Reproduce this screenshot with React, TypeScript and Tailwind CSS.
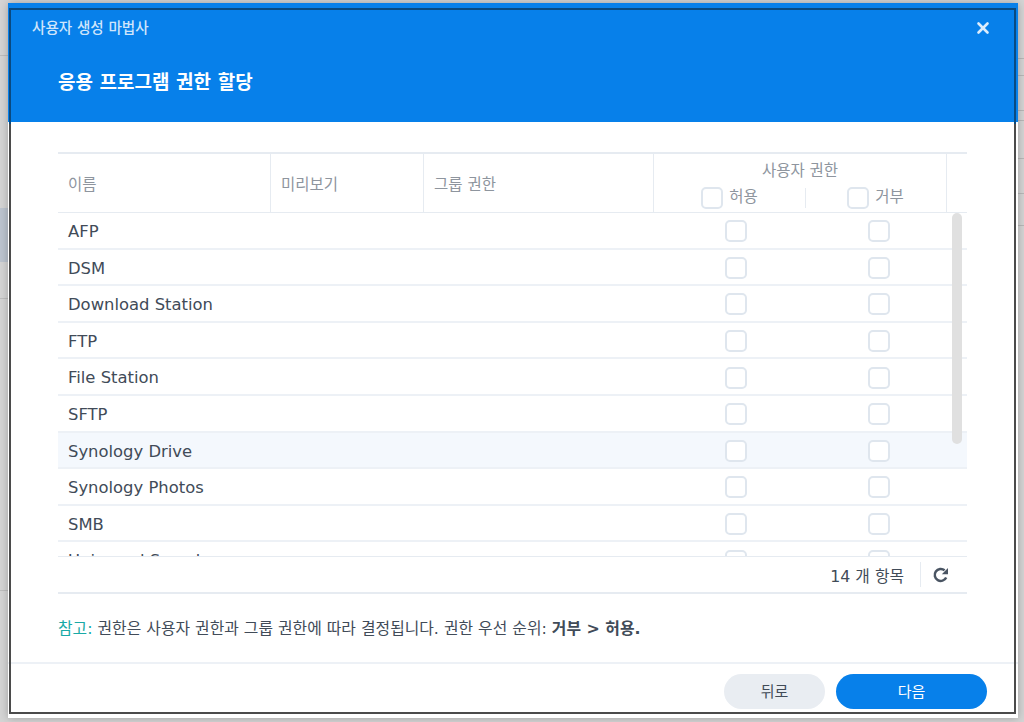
import { X } from "lucide-react";

const APPS = [
  "AFP",
  "DSM",
  "Download Station",
  "FTP",
  "File Station",
  "SFTP",
  "Synology Drive",
  "Synology Photos",
  "SMB",
  "Universal Search",
];

const font = { fontFamily: '"DejaVu Sans", "Noto Sans CJK KR", sans-serif' };

function Box() {
  return <span className="block w-[22px] h-[22px] shrink-0 rounded-[5px] border-2 border-[#dfe6ee] bg-white" />;
}

function Refresh() {
  return (
    <svg width="18" height="18" viewBox="0 0 18 18" fill="none">
      <path d="M14.2 11.4A6 6 0 1 1 12.6 4.3" stroke="#4a5563" strokeWidth="2.5" />
      <path d="M16 2v6.2H9.8z" fill="#4a5563" />
    </svg>
  );
}

export default function App() {
  return (
    <div className="relative w-[1024px] h-[722px] overflow-hidden bg-[#d4d4d4] pl-[8px] pt-[3px]" style={font}>
      {/* page behind the dialog */}
      <div className="absolute left-0 top-[55px] w-[8px] h-px bg-[#bdbdbd]" />
      <div className="absolute left-0 top-[208px] w-[8px] h-[54px] bg-[#bcc4cf]" />
      <div className="absolute left-0 top-[298px] w-[8px] h-px bg-[#bdbdbd]" />
      <div className="absolute left-0 top-[590px] w-[8px] h-px bg-[#bdbdbd]" />
      <div className="absolute right-0 top-[58px] w-[6px] h-px bg-[#b8b8b8]" />
      <div className="absolute right-0 top-[75px] w-[6px] h-px bg-[#b8b8b8]" />
      <div className="absolute right-0 top-[110px] w-[6px] h-px bg-[#b8b8b8]" />
      <div className="absolute right-0 top-[120px] w-[6px] h-px bg-[#b8b8b8]" />
      <div className="absolute right-0 top-[158px] w-[6px] h-px bg-[#b8b8b8]" />
      <div className="absolute right-0 top-[193px] w-[6px] h-px bg-[#b8b8b8]" />
      <div className="absolute right-0 top-[225px] w-[6px] h-px bg-[#b8b8b8]" />

      {/* dialog */}
      <div className="relative w-[1010px] h-[715px] flex flex-col bg-white rounded-t-[4px] shadow-[0_0_8px_rgba(0,0,0,0.25)]">
        <div className="h-[119px] shrink-0 bg-[#0780ea] text-white pl-[24px] pr-[26px] flex flex-col">
          <div className="flex items-center justify-between pt-[15px] h-[35px]">
            <span className="text-[14.6px] font-medium text-[#cfe5fb]">사용자 생성 마법사</span>
            <X className="w-[18px] h-[18px] text-[#dcecfc]" strokeWidth={3.5} />
          </div>
          <h1 className="pl-[26px] mt-[31px] text-[19px] leading-[26px] font-bold">응용 프로그램 권한 할당</h1>
        </div>

        <div className="flex-1 flex flex-col px-[50px] pt-[30px] pr-[51px]">
          {/* table head */}
          <div className="h-[61px] shrink-0 flex border-t-2 border-b border-[#e6ebf1] text-[15.5px] text-[#8e959e]">
            <div className="w-[213px] pl-[10px] pt-[6px] flex items-center border-r border-[#e6ebf1]">이름</div>
            <div className="w-[153px] pl-[10px] pt-[6px] flex items-center border-r border-[#e6ebf1]">미리보기</div>
            <div className="w-[230px] pl-[10px] pt-[6px] flex items-center border-r border-[#e6ebf1]">그룹 권한</div>
            <div className="w-[293px] flex flex-col items-center border-r border-[#e6ebf1]">
              <div className="h-[29px] flex items-center pt-[6px]">사용자 권한</div>
              <div className="w-full flex items-center h-[29px]">
                <div className="w-[151px] flex items-center justify-center gap-[6px]">
                  <Box />
                  <span className="pt-[1px]">허용</span>
                </div>
                <div className="w-px h-[20px] bg-[#e6ebf1]" />
                <div className="w-[139px] flex items-center justify-center gap-[6px]">
                  <Box />
                  <span className="pt-[1px]">거부</span>
                </div>
              </div>
            </div>
          </div>

          {/* table rows */}
          <div className="relative h-[344px] shrink-0 overflow-hidden border-b border-[#e6ebf1]">
            {APPS.map((name) => (
              <div
                key={name}
                className={`h-[36.6px] flex items-center border-b-2 border-[#edf1f6] text-[16.4px] text-[#414b58] ${
                  name === "Synology Drive" ? "bg-[#f4f8fd]" : ""
                }`}
              >
                <div className="w-[595px] pl-[10px] pt-[4px]">{name}</div>
                <div className="w-[293px] flex pt-[2px]">
                  <div className="w-[166px] flex justify-center">
                    <Box />
                  </div>
                  <div className="w-[120px] flex justify-center">
                    <Box />
                  </div>
                </div>
              </div>
            ))}
            <div className="absolute right-[5px] top-[0px] w-[10px] h-[231px] rounded-full bg-[#e0e0e0]" />
          </div>

          {/* pager */}
          <div className="h-[37px] shrink-0 flex items-center justify-end border-b-2 border-[#e6ebf1] text-[15.8px] text-[#414b58]">
            <span className="pt-[4px]">14 개 항목</span>
            <div className="w-px h-[25px] bg-[#e6ebf1] ml-[16px]" />
            <div className="w-[40px] flex justify-center pr-[1px]">
              <Refresh />
            </div>
            <div className="w-[6px]" />
          </div>

          <p className="mt-[25px] text-[15.85px] leading-[20px] text-[#414b58]">
            <span className="text-[#19a9a6]">참고:</span> 권한은 사용자 권한과 그룹 권한에 따라 결정됩니다. 권한 우선 순위:{" "}
            <b>거부 &gt; 허용.</b>
          </p>
        </div>

        {/* footer */}
        <div className="h-[56px] shrink-0 border-t-2 border-[#edf1f6] flex justify-end gap-[11px] pt-[10px] pr-[31px]">
          <button className="w-[101px] h-[35px] pt-[2px] rounded-full bg-[#e9edf2] text-[15px] text-[#414b58]">뒤로</button>
          <button className="w-[151px] h-[35px] pt-[2px] rounded-full bg-[#0780ea] text-[15px] text-white">다음</button>
        </div>

        {/* dark outline that sits over the dialog */}
        <div className="absolute left-[1px] top-[5px] w-[1007px] h-[706px] border-2 border-[#4b4b4b] pointer-events-none" />
        <div className="absolute left-[1px] top-[5px] w-[1007px] h-[116px] border-2 border-b-0 border-[#0a4a80] pointer-events-none" />
      </div>
    </div>
  );
}
